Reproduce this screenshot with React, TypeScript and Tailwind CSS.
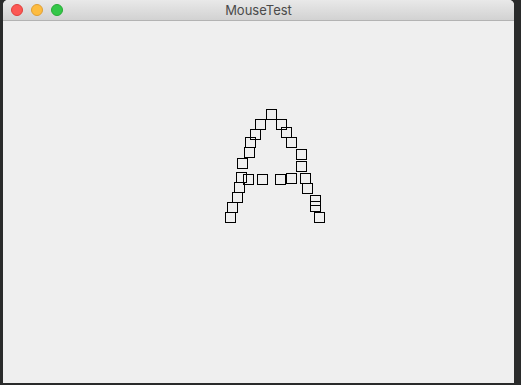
const squares: [number, number][] = [
  [266, 109], [255, 119], [276, 119], [250, 129], [281, 127],
  [245, 137], [286, 137], [244, 147], [296, 149], [237, 158],
  [296, 161], [236, 172], [243, 174], [257, 174], [275, 174],
  [286, 173], [300, 173], [234, 182], [302, 183], [232, 192],
  [227, 202], [225, 212], [310, 195], [310, 201], [314, 212],
];

export default function App() {
  return (
    <div className="w-[521px] h-[385px] bg-[#2a2b2b] pl-[3px] pr-[7px] pb-[2px] flex">
      <div className="flex-1 flex flex-col rounded-t-[5px] overflow-hidden bg-[#efefef]">
        {/* Title bar */}
        <div className="relative h-[21px] flex items-center justify-center bg-gradient-to-b from-[#e9e9e9] to-[#d2d2d2] border-b border-[#b3b3b3]">
          <div className="absolute left-[8px] top-[4px] flex gap-[8px]">
            <span className="w-[12px] h-[12px] rounded-full bg-[#fc5753] border border-[#df3e3b]" />
            <span className="w-[12px] h-[12px] rounded-full bg-[#fdbc40] border border-[#de9f34]" />
            <span className="w-[12px] h-[12px] rounded-full bg-[#33c748] border border-[#27aa35]" />
          </div>
          <span
            className="text-[13px] text-[#4a4a4a] leading-none pt-[1px]"
            style={{ fontFamily: "Inter, 'Liberation Sans', sans-serif" }}
          >
            MouseTest
          </span>
        </div>

        {/* Canvas */}
        <div className="flex-1 bg-[#efefef]">
          <svg width="511" height="362" viewBox="3 21 511 362" className="block">
            {squares.map(([x, y], i) => (
              <rect
                key={i}
                x={x + 0.5}
                y={y + 0.5}
                width={10}
                height={10}
                fill="none"
                stroke="#000"
                strokeWidth={1}
              />
            ))}
          </svg>
        </div>
      </div>
    </div>
  );
}
